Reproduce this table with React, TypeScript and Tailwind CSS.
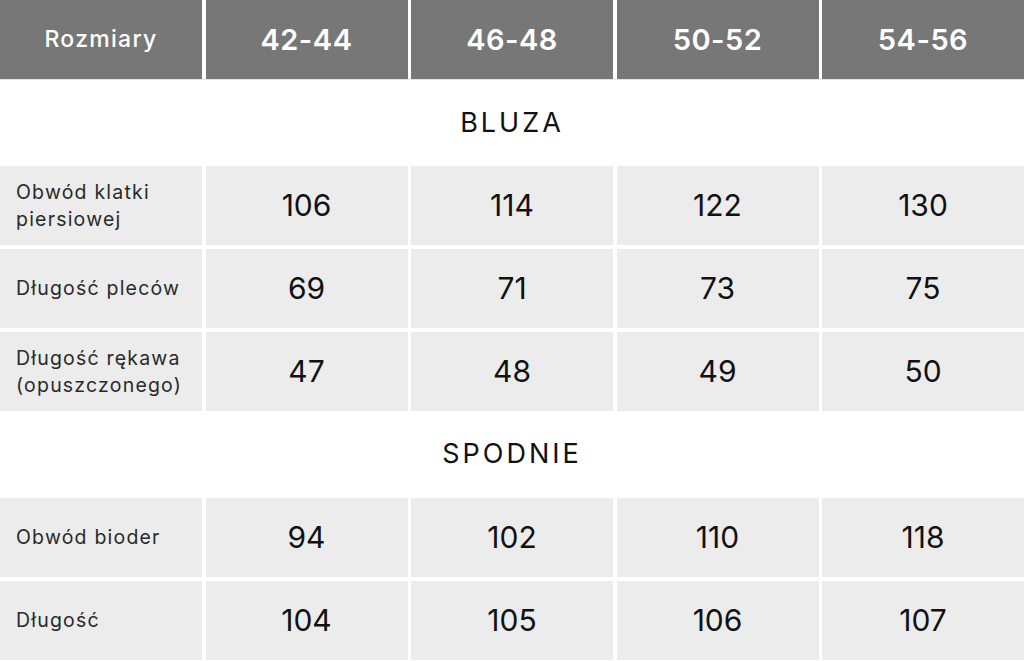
const sizes = ['42-44', '46-48', '50-52', '54-56'];

const sections = [
  {
    title: 'BLUZA',
    rows: [
      { label: ['Obwód klatki', 'piersiowej'], values: ['106', '114', '122', '130'] },
      { label: ['Długość pleców'], values: ['69', '71', '73', '75'] },
      { label: ['Długość rękawa', '(opuszczonego)'], values: ['47', '48', '49', '50'] },
    ],
  },
  {
    title: 'SPODNIE',
    rows: [
      { label: ['Obwód bioder'], values: ['94', '102', '110', '118'] },
      { label: ['Długość'], values: ['104', '105', '106', '107'] },
    ],
  },
];

export default function App() {
  return (
    <div className="w-[1024px] h-[661px] bg-white overflow-hidden" style={{ fontFamily: 'Inter, "Open Sans", sans-serif' }}>
      {/* header */}
      <div className="grid grid-cols-5 gap-x-[3.5px] h-[80px] border-b border-[#e4e4e4]">
        <div className="bg-[#777777] flex items-center justify-center text-white text-[23px] font-medium tracking-[1.3px]">
          Rozmiary
        </div>
        {sizes.map((s) => (
          <div key={s} className="bg-[#777777] flex items-center justify-center text-white text-[29px] font-semibold tracking-[0.5px]">
            {s}
          </div>
        ))}
      </div>

      {sections.map((sec, i) => (
        <div key={sec.title}>
          <div
            className={`flex items-center justify-center text-[27px] tracking-[3px] text-[#111] ${i === 0 ? 'h-[86px]' : 'h-[87px]'}`}
          >
            {sec.title}
          </div>
          <div className="flex flex-col gap-y-[4px]">
            {sec.rows.map((row) => (
              <div key={row.label.join(' ')} className="grid grid-cols-5 gap-x-[3.5px] h-[79px]">
                <div className="bg-[#ececec] flex flex-col justify-center pl-4 text-[19.5px] leading-[27px] tracking-[1.2px] text-[#2a2a2a]">
                  {row.label.map((l) => (
                    <span key={l}>{l}</span>
                  ))}
                </div>
                {row.values.map((v, j) => (
                  <div key={j} className="bg-[#ececec] flex items-center justify-center text-[30px] text-[#111]">
                    {v}
                  </div>
                ))}
              </div>
            ))}
          </div>
        </div>
      ))}
    </div>
  );
}
